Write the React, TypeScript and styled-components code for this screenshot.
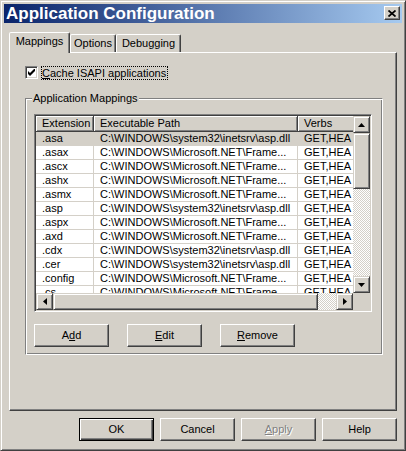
import React from "react";
import styled, { createGlobalStyle } from "styled-components";

const FACE = "#d4d0c8";
const SHADOW = "#808080";
const DARK = "#404040";
const HILITE = "#ffffff";
const GRID = "#d4d0c8";

const GlobalStyle = createGlobalStyle`
  html, body { margin: 0; padding: 0; background: ${FACE}; }
  body {
    font-family: "Liberation Sans", Arial, sans-serif;
    font-size: 11px;
    color: #000;
  }
  * { box-sizing: border-box; }
`;

const Window = styled.div`
  width: 406px;
  height: 451px;
  display: flex;
  flex-direction: column;
  background: ${FACE};
  border: 1px solid;
  border-color: ${FACE} ${DARK} ${DARK} ${FACE};
  box-shadow: inset 1px 1px ${HILITE}, inset -1px -1px ${SHADOW};
  padding: 3px;
`;

const TitleBar = styled.div`
  flex: none;
  height: 19px;
  display: flex;
  align-items: flex-start;
  justify-content: space-between;
  padding: 0 2px;
  background: linear-gradient(to right, #0a246a, #a6caf0);
`;

const Title = styled.span`
  color: #fff;
  font-weight: bold;
  font-size: 17px;
  line-height: 19px;
  white-space: nowrap;
`;

const CloseButton = styled.div`
  margin-top: 2px;
  width: 16px;
  height: 14px;
  background: ${FACE};
  border: 1px solid;
  border-color: ${HILITE} ${DARK} ${DARK} ${HILITE};
  box-shadow: inset -1px -1px ${SHADOW};
  display: flex;
  align-items: center;
  justify-content: center;
`;

const Body = styled.div`
  flex: 1;
  display: flex;
  flex-direction: column;
  padding: 9px 5px 6px 5px;
`;

const TabStrip = styled.div`
  flex: none;
  height: 20px;
  display: flex;
  align-items: flex-end;
  position: relative;
  z-index: 1;
`;

const Tab = styled.div<{ $active?: boolean; $w: number }>`
  flex: none;
  width: ${(p) => p.$w}px;
  height: ${(p) => (p.$active ? 21 : 18)}px;
  margin-bottom: ${(p) => (p.$active ? -1 : 0)}px;
  background: ${FACE};
  border: 1px solid;
  border-bottom: none;
  border-color: ${HILITE} ${DARK} transparent ${HILITE};
  box-shadow: inset -1px 0 ${SHADOW};
  border-radius: 2px 2px 0 0;
  padding-top: 2px;
  text-align: center;
  line-height: 13px;
  white-space: nowrap;
  position: relative;
  z-index: ${(p) => (p.$active ? 2 : 1)};
`;

const Panel = styled.div`
  flex: 1;
  display: flex;
  flex-direction: column;
  align-items: flex-start;
  border: 1px solid;
  border-color: ${HILITE} ${DARK} ${DARK} ${HILITE};
  box-shadow: inset -1px -1px ${SHADOW};
  padding: 13px 13px 0 15px;
`;

const CheckRow = styled.label`
  display: flex;
  align-items: flex-start;
  gap: 3px;
`;

const CheckBox = styled.span`
  width: 13px;
  height: 13px;
  background: #fff;
  border: 1px solid;
  border-color: ${SHADOW} ${HILITE} ${HILITE} ${SHADOW};
  box-shadow: inset 1px 1px ${DARK}, inset -1px -1px ${FACE};
  display: flex;
  align-items: center;
  justify-content: center;
`;

const FocusLabel = styled.span`
  border: 1px dotted #000;
  padding: 0 1px 0 0;
  line-height: 12px;
  white-space: nowrap;
`;

const Group = styled.fieldset`
  margin: 12px 0 0 0;
  width: 358px;
  min-width: 0;
  border: 1px solid;
  border-color: ${SHADOW} ${HILITE} ${HILITE} ${SHADOW};
  box-shadow: inset 1px 1px ${HILITE}, inset -1px -1px ${SHADOW};
  padding: 9px 10px 7px 8px;
`;

const Legend = styled.legend`
  margin-left: -2px;
  padding: 0 1px;
  line-height: 13px;
  background: ${FACE};
`;

const ListView = styled.div`
  width: 338px;
  height: 198px;
  border: 1px solid;
  border-color: ${SHADOW} ${HILITE} ${HILITE} ${SHADOW};
  box-shadow: inset 1px 1px ${DARK}, inset -1px -1px ${FACE};
  padding: 1px;
  background: #fff;
  display: grid;
  grid-template-columns: 1fr 17px;
  grid-template-rows: 1fr 17px;
`;

const Viewport = styled.div`
  overflow: hidden;
  min-width: 0;
  min-height: 0;
  background: #fff;
`;

const HeaderRow = styled.div`
  display: flex;
  height: 16px;
`;

const HeaderCell = styled.div<{ $w: number }>`
  flex: none;
  width: ${(p) => p.$w}px;
  height: 16px;
  background: ${FACE};
  border-right: 1px solid ${DARK};
  border-bottom: 1px solid ${DARK};
  box-shadow: inset 1px 1px ${HILITE}, inset -1px -1px ${SHADOW};
  padding-left: 6px;
  line-height: 15px;
  white-space: nowrap;
  overflow: hidden;
`;

const Row = styled.div<{ $selected?: boolean }>`
  display: flex;
  height: 14px;
  background: ${(p) => (p.$selected ? FACE : "#fff")};
`;

const Cell = styled.div<{ $w: number }>`
  flex: none;
  width: ${(p) => p.$w}px;
  height: 14px;
  border-right: 1px solid ${GRID};
  border-bottom: 1px solid ${GRID};
  padding-left: 6px;
  line-height: 13px;
  white-space: nowrap;
  overflow: hidden;
`;

const checker = `
  background-color: ${HILITE};
  background-image: conic-gradient(${FACE} 25%, ${HILITE} 0 50%, ${FACE} 0 75%, ${HILITE} 0);
  background-size: 2px 2px;
`;

const VScroll = styled.div`
  display: flex;
  flex-direction: column;
  min-height: 0;
  ${checker}
`;

const HScroll = styled.div`
  display: flex;
  min-width: 0;
  ${checker}
`;

const Corner = styled.div`
  background: ${FACE};
`;

const raised = `
  background: ${FACE};
  border: 1px solid;
  border-color: ${FACE} ${DARK} ${DARK} ${FACE};
  box-shadow: inset 1px 1px ${HILITE}, inset -1px -1px ${SHADOW};
`;

const ScrollButton = styled.div`
  flex: none;
  width: 17px;
  height: 17px;
  ${raised}
  display: flex;
  align-items: center;
  justify-content: center;
`;

const Thumb = styled.div<{ $len: number; $vertical?: boolean }>`
  flex: none;
  ${(p) => (p.$vertical ? `height: ${p.$len}px; width: 17px;` : `width: ${p.$len}px; height: 17px;`)}
  ${raised}
`;

const Trough = styled.div`
  flex: 1;
`;

const ButtonRow = styled.div`
  display: flex;
  gap: 18px;
  margin-top: 12px;
`;

const Button = styled.button<{ $default?: boolean; $disabled?: boolean }>`
  width: 75px;
  height: 23px;
  padding: 0;
  font-family: "Liberation Sans", Arial, sans-serif;
  font-size: 11px;
  line-height: 13px;
  color: ${(p) => (p.$disabled ? SHADOW : "#000")};
  text-shadow: ${(p) => (p.$disabled ? `1px 1px ${HILITE}` : "none")};
  background: ${FACE};
  border: 1px solid;
  border-color: ${(p) => (p.$default ? "#000" : `${HILITE} ${DARK} ${DARK} ${HILITE}`)};
  box-shadow: ${(p) =>
    p.$default
      ? `inset 1px 1px ${HILITE}, inset -1px -1px ${DARK}, inset -2px -2px ${SHADOW}`
      : `inset -1px -1px ${SHADOW}`};
  cursor: default;
`;

const DialogButtons = styled.div`
  flex: none;
  display: flex;
  justify-content: flex-end;
  gap: 6px;
  margin-top: 7px;
`;

const Arrow = ({ dir }: { dir: "up" | "down" | "left" | "right" }) => {
  const vertical = dir === "up" || dir === "down";
  const w = vertical ? 7 : 4;
  const h = vertical ? 4 : 7;
  const pts =
    dir === "up"
      ? "3.5,0 7,4 0,4"
      : dir === "down"
      ? "0,0 7,0 3.5,4"
      : dir === "left"
      ? "4,0 4,7 0,3.5"
      : "0,0 4,3.5 0,7";
  return (
    <svg width={w} height={h} viewBox={`0 0 ${w} ${h}`}>
      <polygon points={pts} fill="#000" />
    </svg>
  );
};

const SYS = "C:\\WINDOWS\\system32\\inetsrv\\asp.dll";
const NET = "C:\\WINDOWS\\Microsoft.NET\\Frame...";
const VERBS = "GET,HEA";

const rows: [string, string][] = [
  [".asa", SYS],
  [".asax", NET],
  [".ascx", NET],
  [".ashx", NET],
  [".asmx", NET],
  [".asp", SYS],
  [".aspx", NET],
  [".axd", NET],
  [".cdx", SYS],
  [".cer", SYS],
  [".config", NET],
  [".cs", NET],
];

const COLS = [58, 204, 90];

export default function App() {
  return (
    <>
      <GlobalStyle />
      <Window>
        <TitleBar>
          <Title>Application Configuration</Title>
          <CloseButton>
            <svg width="8" height="7" viewBox="0 0 8 7">
              <path d="M0.5 0.5 L7.5 6.5 M7.5 0.5 L0.5 6.5" stroke="#000" strokeWidth="1.7" />
            </svg>
          </CloseButton>
        </TitleBar>
        <Body>
          <TabStrip>
            <Tab $active $w={61}>Mappings</Tab>
            <Tab $w={46}>Options</Tab>
            <Tab $w={65}>Debugging</Tab>
          </TabStrip>
          <Panel>
            <CheckRow>
              <CheckBox>
                <svg width="7" height="7" viewBox="0 0 7 7">
                  <polygon points="0,2 2,4 7,-1 7,2 2,7 0,5" fill="#000" />
                </svg>
              </CheckBox>
              <FocusLabel>
                <u>C</u>ache ISAPI applications
              </FocusLabel>
            </CheckRow>
            <Group>
              <Legend>Application Mappings</Legend>
              <ListView>
                <Viewport>
                  <HeaderRow>
                    <HeaderCell $w={COLS[0]}>Extension</HeaderCell>
                    <HeaderCell $w={COLS[1]}>Executable Path</HeaderCell>
                    <HeaderCell $w={COLS[2]}>Verbs</HeaderCell>
                  </HeaderRow>
                  {rows.map(([ext, path], i) => (
                    <Row key={ext} $selected={i === 0}>
                      <Cell $w={COLS[0]}>{ext}</Cell>
                      <Cell $w={COLS[1]}>{path}</Cell>
                      <Cell $w={COLS[2]}>{VERBS}</Cell>
                    </Row>
                  ))}
                </Viewport>
                <VScroll>
                  <ScrollButton>
                    <Arrow dir="up" />
                  </ScrollButton>
                  <Thumb $vertical $len={56} />
                  <Trough />
                  <ScrollButton>
                    <Arrow dir="down" />
                  </ScrollButton>
                </VScroll>
                <HScroll>
                  <ScrollButton>
                    <Arrow dir="left" />
                  </ScrollButton>
                  <Thumb $len={265} />
                  <Trough />
                  <ScrollButton>
                    <Arrow dir="right" />
                  </ScrollButton>
                </HScroll>
                <Corner />
              </ListView>
              <ButtonRow>
                <Button>
                  A<u>d</u>d
                </Button>
                <Button>
                  <u>E</u>dit
                </Button>
                <Button>
                  <u>R</u>emove
                </Button>
              </ButtonRow>
            </Group>
          </Panel>
          <DialogButtons>
            <Button $default>OK</Button>
            <Button>Cancel</Button>
            <Button $disabled>
              <u>A</u>pply
            </Button>
            <Button>Help</Button>
          </DialogButtons>
        </Body>
      </Window>
    </>
  );
}
